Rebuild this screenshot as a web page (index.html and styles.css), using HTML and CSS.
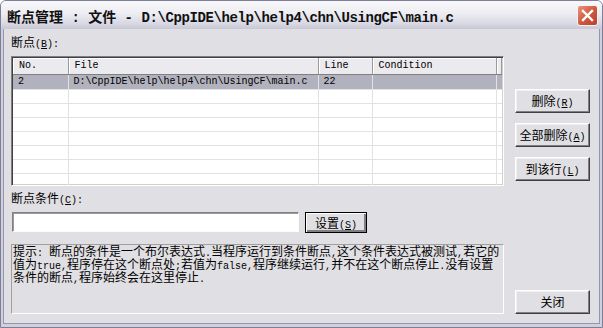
FILE: index.html
```html
<!DOCTYPE html>
<html lang="zh-CN">
<head>
    <meta charset="UTF-8">
    <title>断点管理</title>
    <link rel="stylesheet" href="styles.css">
</head>
<body>
    <div class="window">
        <!-- Title bar -->
        <div class="titlebar">
            <span class="title">断点管理 : 文件 - <span class="path">D:\CppIDE\help\help4\chn\UsingCF\main.c</span></span>
            <div class="close-btn">
                <svg width="13" height="13" viewBox="0 0 13 13">
                    <path d="M2 2 L11 11 M11 2 L2 11" stroke="#fff" stroke-width="2.4" stroke-linecap="square"/>
                </svg>
            </div>
        </div>

        <div class="client">
            <div class="main">
                <div class="label">断点<span class="en">(<u>B</u>):</span></div>

                <div class="list">
                    <table class="grid">
                        <colgroup>
                            <col style="width:55px">
                            <col style="width:250px">
                            <col style="width:54px">
                            <col style="width:124px">
                            <col>
                        </colgroup>
                        <thead>
                            <tr>
                                <th>No.</th>
                                <th>File</th>
                                <th>Line</th>
                                <th>Condition</th>
                                <th></th>
                            </tr>
                        </thead>
                        <tbody>
                            <tr class="selected">
                                <td>2</td>
                                <td>D:\CppIDE\help\help4\chn\UsingCF\main.c</td>
                                <td>22</td>
                                <td></td>
                                <td class="filler"></td>
                            </tr>
                            <tr><td></td><td></td><td></td><td></td><td class="filler"></td></tr>
                            <tr><td></td><td></td><td></td><td></td><td class="filler"></td></tr>
                            <tr><td></td><td></td><td></td><td></td><td class="filler"></td></tr>
                            <tr><td></td><td></td><td></td><td></td><td class="filler"></td></tr>
                            <tr><td></td><td></td><td></td><td></td><td class="filler"></td></tr>
                            <tr><td></td><td></td><td></td><td></td><td class="filler"></td></tr>
                            <tr><td></td><td></td><td></td><td></td><td class="filler"></td></tr>
                            <tr><td></td><td></td><td></td><td></td><td class="filler"></td></tr>
                        </tbody>
                    </table>
                </div>

                <div class="label label-cond">断点条件<span class="en">(<u>C</u>):</span></div>

                <div class="cond-row">
                    <input class="cond-input" type="text">
                    <button class="btn btn-default">设置<span class="en">(<u>S</u>)</span></button>
                </div>

                <div class="hint">
                    提示<span class="en">: </span>断点的条件是一个布尔表达式<span class="en">.</span>当程序运行到条件断点<span class="en">,</span>这个条件表达式被测试<span class="en">,</span>若它的<br>
                    值为<span class="en">true,</span>程序停在这个断点处<span class="en">;</span>若值为<span class="en">false,</span>程序继续运行<span class="en">,</span>并不在这个断点停止<span class="en">.</span>没有设置<br>
                    条件的断点<span class="en">,</span>程序始终会在这里停止<span class="en">.</span>
                </div>
            </div>

            <div class="side">
                <button class="btn">删除<span class="en">(<u>R</u>)</span></button>
                <button class="btn">全部删除<span class="en">(<u>A</u>)</span></button>
                <button class="btn">到该行<span class="en">(<u>L</u>)</span></button>
                <button class="btn btn-close">关闭</button>
            </div>
        </div>
    </div>
</body>
</html>
```

FILE: styles.css
```css
body, html {
    margin: 0;
    padding: 0;
    background-color: #ffffff;
    font-family: "Liberation Mono", "Noto Sans CJK SC", monospace;
    font-size: 12px;
    color: #000;
}

/* Window frame */
.window {
    width: 603px;
    height: 328px;
    box-sizing: border-box;
    border: 1px solid #7d7e98;
    border-radius: 6px 6px 0 0;
    background-color: #cfd0dc;
    padding: 0 2px 3px 2px;
    display: flex;
    flex-direction: column;
    overflow: hidden;
}

/* Title bar */
.titlebar {
    height: 28px;
    margin: 0 -2px;
    padding: 0 4px 0 6px;
    display: flex;
    align-items: center;
    justify-content: space-between;
    background: linear-gradient(#f9f9fb, #ececf2 45%, #d9d9e4 80%, #c8c8d6);
}

.title {
    font-size: 14px;
    font-weight: bold;
    color: #101010;
    white-space: nowrap;
    padding-top: 1px;
}

.title .path {
    letter-spacing: -0.4px;
}

.close-btn {
    width: 21px;
    height: 21px;
    box-sizing: border-box;
    border: 1px solid #f4f4f4;
    border-radius: 3px;
    background: linear-gradient(135deg, #e9957f, #d05a40 50%, #b8402b);
    display: flex;
    align-items: center;
    justify-content: center;
    margin-top: 1px;
}

/* Client area */
.client {
    flex: 1;
    display: flex;
    background-color: #e0dfe3;
    border: 1px solid #9596ad;
    border-top: none;
    padding: 9px 9px 9px 7px;
}

.main {
    width: 493px;
    display: flex;
    flex-direction: column;
}

.side {
    width: 75px;
    margin-left: 11px;
    padding-top: 51px;
    display: flex;
    flex-direction: column;
    gap: 10px;
}

.en {
    font-size: 10px;
}

.label {
    height: 12px;
    line-height: 12px;
    margin-bottom: 6px;
    white-space: nowrap;
}

.label-cond {
    margin-top: 8px;
}

/* List view */
.list {
    height: 130px;
    box-sizing: border-box;
    border: 1px solid;
    border-color: #808080 #ffffff #ffffff #808080;
    box-shadow: inset 1px 1px #404040, inset -1px -1px #d4d0c8;
    padding: 1px;
    background-color: #fff;
    overflow: hidden;
}

.grid {
    width: 100%;
    table-layout: fixed;
    border-collapse: collapse;
    font-family: "Liberation Mono", monospace;
    font-size: 10px;
}

.grid th {
    height: 16px;
    padding: 0 0 0 6px;
    text-align: left;
    font-weight: normal;
    background-color: #ebeaee;
    border-right: 1px solid #9a9a9a;
    border-bottom: 1px solid #808080;
    box-shadow: inset 1px 1px #ffffff;
    box-sizing: border-box;
}

.grid td {
    height: 13px;
    padding: 0 0 0 5px;
    border-right: 1px solid #e2e2e2;
    border-bottom: 1px solid #e2e2e2;
    white-space: nowrap;
    overflow: hidden;
    line-height: 12px;
}

.grid td.filler {
    border-right: none;
}

.grid tr.selected td {
    background-color: #b2b2be;
    height: 14px;
}

/* Condition row */
.cond-row {
    display: flex;
    align-items: flex-start;
    height: 21px;
}

.cond-input {
    width: 287px;
    height: 20px;
    box-sizing: border-box;
    margin: 0 0 0 1px;
    border: 1px solid;
    border-color: #808080 #fbfbf6 #fbfbf6 #808080;
    box-shadow: inset 1px 1px #9a9a9a;
    background-color: #fff;
    outline: none;
}

/* Buttons */
.btn {
    height: 24px;
    flex-shrink: 0;
    box-sizing: border-box;
    padding: 0;
    font-family: "Liberation Mono", "Noto Sans CJK SC", monospace;
    font-size: 12px;
    color: #000;
    background-color: #e0dfe3;
    border: 1px solid;
    border-color: #ffffff #404040 #404040 #ffffff;
    box-shadow: inset -1px -1px #808080, inset 1px 1px #f1f0f3;
    white-space: nowrap;
}

.btn-default {
    width: 62px;
    height: 21px;
    margin-left: 6px;
    border: 1px solid #000;
    box-shadow: inset 1px 1px #ffffff, inset -2px -2px #808080;
}

.btn-close {
    margin-top: auto;
}

/* Hint box */
.hint {
    flex: 1;
    margin-top: 11px;
    box-sizing: border-box;
    border: 1px solid;
    border-color: #a0a0a0 #ffffff #ffffff #a0a0a0;
    padding: 2px 0 0 1px;
    line-height: 12px;
    white-space: nowrap;
    overflow: hidden;
}
```
